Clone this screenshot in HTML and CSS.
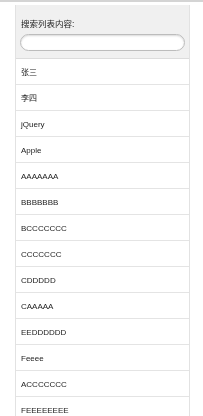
FILE: index.html
```html
<!DOCTYPE html>
<html lang="zh-CN">
<head>
    <meta charset="UTF-8">
    <meta name="viewport" content="width=device-width, initial-scale=1.0">
    <title>列表过滤</title>
    <link rel="stylesheet" href="styles.css">
</head>
<body>
    <div class="topline"></div>

    <div class="list-box">
        <div class="filter-bar">
            <label class="filter-label" for="filterInput">搜索列表内容:</label>
            <input class="filter-input" id="filterInput" type="text">
        </div>

        <ul class="list" id="list">
            <li>张三</li>
            <li>李四</li>
            <li>jQuery</li>
            <li>Apple</li>
            <li>AAAAAAA</li>
            <li>BBBBBBB</li>
            <li>BCCCCCCC</li>
            <li>CCCCCCC</li>
            <li>CDDDDD</li>
            <li>CAAAAA</li>
            <li>EEDDDDDD</li>
            <li>Feeee</li>
            <li>ACCCCCCC</li>
            <li>FEEEEEEEE</li>
        </ul>
    </div>
</body>
</html>
```

FILE: styles.css
```css
body {
    margin: 0;
    background: #fff;
    font-family: "Liberation Sans", Arial, "Noto Sans CJK SC", sans-serif;
    color: #222;
    -webkit-font-smoothing: antialiased;
}

.topline {
    height: 2px;
    background: #d4d4d4;
}

.list-box {
    margin: 3px 13px 0 15px;
    border-left: 1px solid #e2e2e2;
    border-right: 1px solid #e2e2e2;
    will-change: transform;
}

.filter-bar {
    background: #f0f0f0;
    padding: 12px 4px 7px 4px;
    border-bottom: 1px solid #dcdcdc;
}

.filter-label {
    display: block;
    font-size: 8.5px;
    color: #222;
    margin: 0 0 5px 1px;
}

.filter-input {
    display: block;
    box-sizing: border-box;
    width: 100%;
    height: 17px;
    margin: 0;
    border: 1px solid #bcbcbc;
    border-radius: 9px;
    background: #fff;
    box-shadow: inset 0 1px 2px rgba(0,0,0,0.15);
    outline: none;
}

.list {
    list-style: none;
    margin: 0;
    padding: 0;
}

.list li {
    height: 25px;
    line-height: 27px;
    padding-left: 5px;
    font-size: 8px;
    font-weight: normal;
    color: #222;
    border-bottom: 1px solid #e4e4e4;
}
```
